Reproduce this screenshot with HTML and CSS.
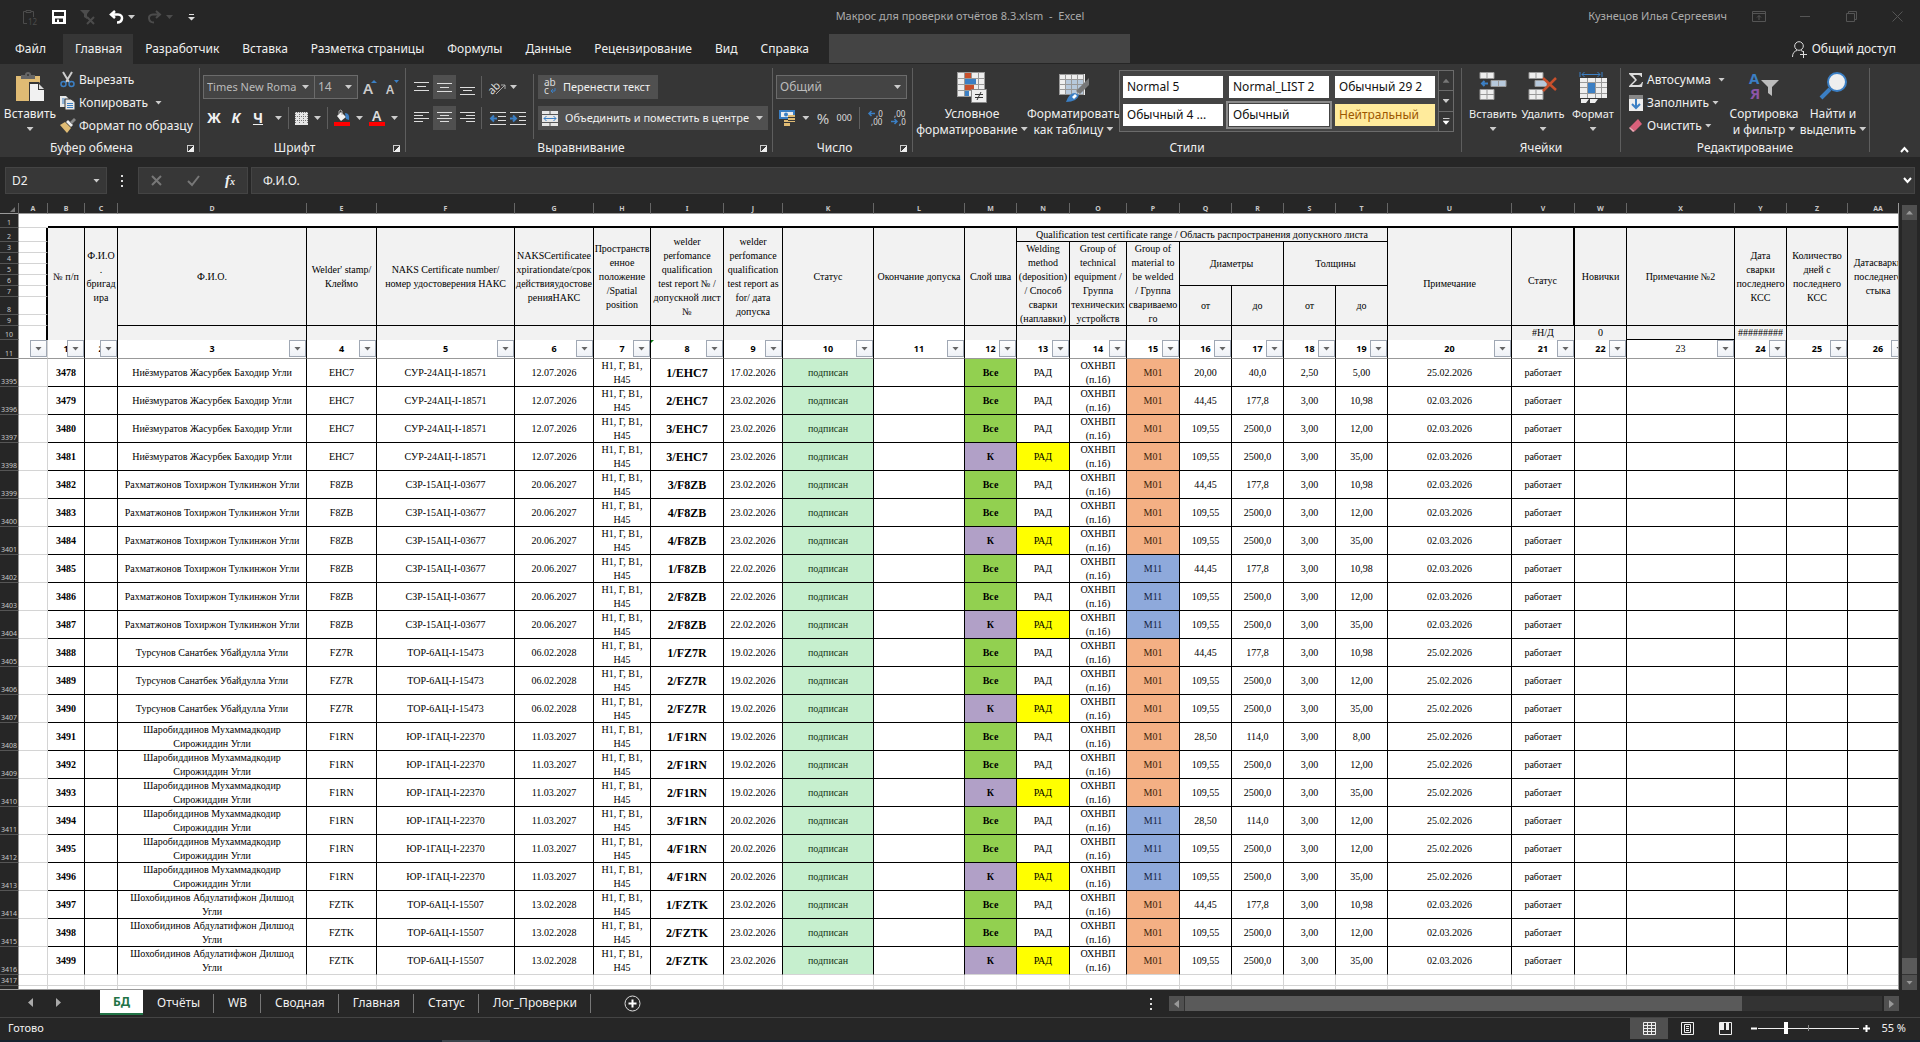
FILE: index.html
```html
<!DOCTYPE html>
<html lang="ru">
<head>
<meta charset="utf-8">
<title>Макрос для проверки отчётов 8.3.xlsm - Excel</title>
<link rel="stylesheet" href="styles.css">
</head>
<body>
<header class="titlebar">
  <div class="qat">
    <button class="ib dim" aria-label="Вставить значения"><svg width="16" height="16" viewBox="0 0 16 16"><path d="M4 2.500H1.500V14.500H5M9 2.500h2.500V8M4 1.500h5v2H4z" fill="none" stroke="#4c4c4c"/><text x="6" y="16" class="svg8" fill="#4c4c4c">12</text></svg></button>
    <button class="ib" aria-label="Сохранить"><svg width="14" height="14" viewBox="0 0 14 14"><path d="M0 0h14v14H0zM2 2v4h10V2zM3 8.500V12h2V9.500h2V12h4V8.500z" fill="#fff" fill-rule="evenodd"/></svg></button>
    <button class="ib dim" aria-label="Очистить фильтр"><svg width="15" height="15" viewBox="0 0 15 15"><path d="M0 0h10L7 4v5l-3-2V4z" fill="#4c4c4c"/><path d="M7 7l7 7M14 7l-7 7" stroke="#4c4c4c" stroke-width="2"/></svg></button>
    <button class="ib" aria-label="Отменить"><svg width="15" height="14" viewBox="0 0 15 14"><path d="M6 1L2 4.500 6 8M2 4.500h7c6 0 5 8-1 8" fill="none" stroke="#fff" stroke-width="2.500"/></svg></button><i class="tri"></i>
    <button class="ib dim" aria-label="Вернуть"><svg width="15" height="14" viewBox="0 0 15 14"><path d="M9 1l4 3.500L9 8M13 4.500H6c-6 0-5 8 1 8" fill="none" stroke="#4c4c4c" stroke-width="2"/></svg></button><i class="tri dimtri"></i>
    <button class="ib custom" aria-label="Настройка панели"><svg width="7" height="7" viewBox="0 0 7 7"><path d="M1 0h5v1H1zM0 3h7L3.500 6.500z" fill="#ddd"/></svg></button>
  </div>
  <h1 class="doc">Макрос для проверки отчётов 8.3.xlsm&nbsp; -&nbsp; Excel</h1>
  <div class="window">
    <span class="user">Кузнецов Илья Сергеевич</span>
    <button class="ib" aria-label="Параметры ленты"><svg width="14" height="11" viewBox="0 0 14 11"><path d="M.5.500h13v10H.5zM.5 2.500h13M7 9V4.500M5 6.500l2-2 2 2" fill="none" stroke="#555"/></svg></button>
    <button class="ib" aria-label="Свернуть"><svg width="10" height="11" viewBox="0 0 10 11"><path d="M0 5.500h10" stroke="#555"/></svg></button>
    <button class="ib" aria-label="Восстановить"><svg width="11" height="11" viewBox="0 0 11 11"><path d="M.5 2.500h8v8h-8zM2.500 2V.5h8v8H9" fill="none" stroke="#555"/></svg></button>
    <button class="ib" aria-label="Закрыть"><svg width="11" height="11" viewBox="0 0 11 11"><path d="M.5.500l10 10M10.500.5l-10 10" stroke="#555"/></svg></button>
  </div>
</header>
<nav class="tabs">
  <button>Файл</button><button class="on">Главная</button><button>Разработчик</button><button>Вставка</button><button>Разметка страницы</button><button>Формулы</button><button>Данные</button><button>Рецензирование</button><button>Вид</button><button>Справка</button>
  <input class="search" type="text" aria-label="Поиск">
  <button class="share"><svg width="16" height="17" viewBox="0 0 16 17"><circle cx="7" cy="5" r="4.300" fill="none" stroke="#ddd"/><path d="M.5 16c0-4 2-6 4.500-6.500M9 9.500l2 1M8 13.500h7M11.500 10v7" fill="none" stroke="#ddd"/></svg>Общий доступ</button>
</nav>

<section class="ribbon">
  <div class="group g-clip">
    <div class="body">
      <button class="big paste"><svg width="30" height="31" viewBox="0 0 30 31"><path d="M1 4h24v25H1z" fill="#dfbb74"/><path d="M6 7V3h4q0-3 3-3t3 3h4v4z" fill="#666"/><circle cx="13" cy="3" r="1" fill="#363636"/><path d="M14 10h10l6 6v15H14z" fill="#363636"/><path d="M15 12h8v6h6v11H15z" fill="#f1f1f1"/><path d="M24 12l5 5h-5z" fill="#ddd"/></svg>Вставить<i class="tri"></i></button>
      <div class="stack">
        <button><svg width="16" height="16" viewBox="0 0 16 16"><path d="M3 0l6 10M12 0L6 10" stroke="#ccc" stroke-width="2"/><circle cx="3.500" cy="12" r="2.500" fill="none" stroke="#3b7fc4" stroke-width="1.500"/><circle cx="11.500" cy="12" r="2.500" fill="none" stroke="#3b7fc4" stroke-width="1.500"/></svg>Вырезать</button>
        <button><svg width="16" height="16" viewBox="0 0 16 16"><path d="M0 1h6l3 3v8H0z" fill="#e8e8e8"/><path d="M2 4h3M2 6h3M2 8h3" stroke="#3b7fc4"/><path d="M5 4h6l4 3v8H5z" fill="#e8e8e8" stroke="#363636"/><path d="M7 8.500h6M7 10.500h6M7 12.500h6" stroke="#3b7fc4"/></svg>Копировать<i class="tri far"></i></button>
        <button><svg width="16" height="16" viewBox="0 0 16 16"><path d="M0 7l5-3 6 6-4 5z" fill="#dfbb74"/><path d="M6 4l2-2 5 5-2 2z" fill="#eee"/><path d="M10 4l4-4 2 2-4 4z" fill="#888"/></svg>Формат по образцу</button>
      </div>
    </div>
    <div class="label">Буфер обмена<i class="launch"></i></div>
  </div>

  <div class="group g-font">
    <div class="body rows">
      <div class="row">
        <span class="combo c-font"><select aria-label="Шрифт"><option>Times New Roma</option></select></span><span class="combo c-size"><select aria-label="Размер"><option>14</option></select></span>
        <button class="ib grow" aria-label="Увеличить"><svg width="14" height="16" viewBox="0 0 14 16"><text x="0" y="15" class="svg15" fill="#ccc">A</text><path d="M8 4l3-3 3 3z" fill="#3b7fc4"/></svg></button>
        <button class="ib" aria-label="Уменьшить"><svg width="14" height="16" viewBox="0 0 14 16"><text x="0" y="15" class="svg12" fill="#ccc">A</text><path d="M8 1h5l-2.500 3z" fill="#3b7fc4"/></svg></button>
      </div>
      <div class="row fmt">
        <span class="biu"><button class="ib"><b>Ж</b></button><button class="ib"><b><em>К</em></b></button><button class="ib"><b><u>Ч</u></b></button></span><i class="tri"></i><i class="sep"></i>
        <button class="ib" aria-label="Границы"><svg width="13" height="13" viewBox="0 0 13 13"><path d="M0 0h13v13H0z" fill="#e6e6e6"/><path d="M0 .5h13M0 4.500h13M0 8.500h13M.5 0v12M4.500 0v12M8.500 0v12M12.500 0v12" stroke="#777" stroke-dasharray="1 1"/></svg></button><i class="tri"></i><i class="sep"></i>
        <button class="ib" aria-label="Заливка"><svg width="16" height="16" viewBox="0 0 16 16"><path d="M3 6l4-4 5 5-5 4z" fill="#f1f1f1"/><path d="M5 4V1q2-2 3 0v4" fill="none" stroke="#aaa"/><path d="M11 3q5 0 4 7l-3-1z" fill="#3b7fc4"/><path d="M0 12h16v4H0z" fill="#f00"/></svg></button><i class="tri"></i>
        <button class="ib" aria-label="Цвет шрифта"><svg width="16" height="16" viewBox="0 0 16 16"><text x="3" y="11" class="svg14" fill="#ddd">A</text><path d="M0 12h16v4H0z" fill="#f00"/></svg></button><i class="tri"></i>
      </div>
    </div>
    <div class="label">Шрифт<i class="launch"></i></div>
  </div>

  <div class="group g-align">
    <div class="body">
      <div class="rows alignbtns">
        <div class="row">
          <button class="tog" aria-label="По верхнему краю"><svg width="15" height="15"><path d="M0 2.500h15M3 6.500h9M0 10.500h15" stroke="#ddd"/></svg></button>
          <button class="tog sel" aria-label="По середине"><svg width="15" height="15"><path d="M0 3.500h15M3 7.500h9M0 11.500h15" stroke="#ddd"/></svg></button>
          <button class="tog" aria-label="По нижнему краю"><svg width="15" height="15"><path d="M0 7.500h15M3 10.500h9M0 14.500h15" stroke="#ddd"/></svg></button>
          <i class="sep"></i>
          <button class="ib orient" aria-label="Ориентация"><svg width="16" height="16" viewBox="0 0 16 16"><text x="-2" y="13" transform="rotate(-45 4 10)" class="svg11" fill="#ddd">ab</text><path d="M6 15l9-9M11 6h4v4" fill="none" stroke="#aaa"/></svg></button><i class="tri"></i>
        </div>
        <div class="row">
          <button class="tog" aria-label="По левому краю"><svg width="15" height="15"><path d="M0 1.500h15M0 4.500h9M0 7.500h15M0 10.500h9" stroke="#ddd"/></svg></button>
          <button class="tog sel" aria-label="По центру"><svg width="15" height="15"><path d="M0 1.500h15M3 4.500h9M0 7.500h15M3 10.500h9" stroke="#ddd"/></svg></button>
          <button class="tog" aria-label="По правому краю"><svg width="15" height="15"><path d="M0 1.500h15M6 4.500h9M0 7.500h15M6 10.500h9" stroke="#ddd"/></svg></button>
          <i class="sep"></i>
          <button class="ib orient" aria-label="Уменьшить отступ"><svg width="16" height="13"><path d="M0 .5h16M8 4.500h8M8 8.500h8M0 12.500h16" stroke="#ddd"/><path d="M7 6.500H1M4 3.500l-3 3 3 3" fill="none" stroke="#3b7fc4" stroke-width="2"/></svg></button>
          <button class="ib" aria-label="Увеличить отступ"><svg width="16" height="13"><path d="M0 .5h16M9 4.500h7M9 8.500h7M0 12.500h16" stroke="#ddd"/><path d="M0 6.500h6M3 3.500l3 3-3 3" fill="none" stroke="#3b7fc4" stroke-width="2"/></svg></button>
        </div>
      </div>
      <div class="rows wraps">
        <button class="wide"><svg width="14" height="16" viewBox="0 0 14 16"><text x="1" y="7" class="svg10" fill="#ddd">ab</text><text x="1" y="15" class="svg10" fill="#ddd">c</text><path d="M12 9v3H8M10 10l-2 2 2 2" fill="none" stroke="#3b7fc4"/></svg>Перенести текст</button>
        <button class="wide merge"><svg width="16" height="15" viewBox="0 0 16 15"><path d="M0 0h16v15H0z" fill="#e6e6e6"/><path d="M0 3.500h16M0 11.500h16M8 0v3M8 12v3" stroke="#555"/><path d="M2 7.500h12M4.500 5l-2.500 2.500L4.500 10M11.500 5L14 7.500 11.500 10" fill="none" stroke="#3b7fc4"/></svg>Объединить и поместить в центре<i class="tri"></i></button>
      </div>
    </div>
    <div class="label">Выравнивание<i class="launch"></i></div>
  </div>

  <div class="group g-num">
    <div class="body rows">
      <div class="row"><span class="combo c-num"><select aria-label="Числовой формат"><option>Общий</option></select></span></div>
      <div class="row nums">
        <button class="ib" aria-label="Денежный формат"><svg width="16" height="16" viewBox="0 0 16 16"><path d="M0 0h16v9H0z" fill="#3b7fc4"/><path d="M2 2h12v5H2z" fill="#eee"/><circle cx="7" cy="4.500" r="2" fill="#3b7fc4"/><path d="M9 5h7v7H9zM5 10h6v6H5z" fill="#dfbb74"/><path d="M9 7.500h7M9 10.500h7M5 12.500h6" stroke="#363636"/></svg></button><i class="tri"></i>
        <button class="ib pct">%</button><button class="ib ths">000</button><i class="sep"></i>
        <button class="ib" aria-label="Увеличить разрядность"><svg width="16" height="16" viewBox="0 0 16 16"><path d="M7 3.500H1M3.500 1L1 3.500 3.500 6" fill="none" stroke="#3b7fc4" stroke-width="1.500"/><text x="8" y="7" class="svg8" fill="#ddd">,0</text><text x="3" y="15" class="svg8" fill="#ddd">,00</text></svg></button>
        <button class="ib" aria-label="Уменьшить разрядность"><svg width="16" height="16" viewBox="0 0 16 16"><path d="M0 11.500h6M3.500 9L6 11.500 3.500 14" fill="none" stroke="#3b7fc4" stroke-width="1.500"/><text x="3" y="7" class="svg8" fill="#ddd">,00</text><text x="8" y="15" class="svg8" fill="#ddd">,0</text></svg></button>
      </div>
    </div>
    <div class="label">Число<i class="launch"></i></div>
  </div>

  <div class="group g-style">
    <div class="body">
      <button class="big cond"><svg width="30" height="31" viewBox="0 0 30 31"><path d="M0 0h28v25H0z" fill="#eee"/><path d="M8 1h6v5H8zM8 13h9v5H8z" fill="#c8502c"/><path d="M8 7h11v5H8zM8 19h4v5H8z" fill="#3b7fc4"/><path d="M.5 0v25M7.500 0v25M14.500 0v6M21.500 0v25M27.500 0v25M0 .5h28M0 6.500h28M0 12.500h28M0 18.500h28M0 24.500h28" stroke="#999"/><path d="M14.500 17.500h15v13h-15z" fill="#eee" stroke="#888"/><path d="M18 22.500h8M18 25.500h8M24 20l-4 8" stroke="#333"/></svg><span>Условное<br>форматирование <i class="tri"></i></span></button>
      <button class="big tbl"><svg width="30" height="31" viewBox="0 0 30 31"><path d="M0 2h26v21H0z" fill="#eee"/><path d="M6 8h19v15H6z" fill="#b7c9dc"/><path d="M.5 2v21M6.500 2v21M12.500 2v21M18.500 2v21M24.500 2v21M0 2.500h25M0 7.500h25M0 12.500h25M0 17.500h25M0 22.500h25" stroke="#999"/><path d="M30 6v7l-9 9-4-3z" fill="#777"/><path d="M7 30q3-9 9-9l4 2q-2 7-13 7z" fill="#3b7fc4"/><path d="M13 25l3-3 2 2-3 3z" fill="#fff"/></svg><span>Форматировать<br>как таблицу <i class="tri"></i></span></button>
      <div class="gallery">
        <div class="swatches">
          <button>Normal 5</button><button>Normal_LIST 2</button><button>Обычный 29 2</button>
          <button>Обычный 4 ...</button><button class="cur">Обычный</button><button class="neutral">Нейтральный</button>
        </div>
        <div class="scroller"><button aria-label="Вверх"><i class="tri up"></i></button><button aria-label="Вниз"><i class="tri"></i></button><button aria-label="Ещё"><i class="tri more"></i></button></div>
      </div>
    </div>
    <div class="label">Стили</div>
  </div>

  <div class="group g-cells">
    <div class="body">
      <button class="big"><svg width="28" height="31" viewBox="0 0 28 31"><path d="M1 1h14v6H1zM1 18h14v10H1z" fill="#eee"/><path d="M12 9h15v6H12z" fill="#b7c9dc"/><path d="M1 .5h14v6H1zM8 0v7M1 17.500h14v10H1zM8 17v11M1 22.500h14M12 8.500h15v6H12zM19.500 9v6" fill="none" stroke="#999"/><path d="M9 11.500H3M5.500 9L3 11.500 5.500 14" fill="none" stroke="#3b7fc4" stroke-width="2"/></svg>Вставить<i class="tri"></i></button>
      <button class="big"><svg width="30" height="31" viewBox="0 0 30 31"><path d="M1 1h14v6H1zM1 18h14v10H1z" fill="#eee"/><path d="M7 9h12v6H7z" fill="#b7c9dc"/><path d="M1 .5h14v6H1zM8 0v7M1 17.500h14v10H1zM8 17v11M1 22.500h14M7 8.500h12v6H7z" fill="none" stroke="#999"/><path d="M15 6l13 12M28 6L15 19" stroke="#c8502c" stroke-width="2.500"/></svg>Удалить<i class="tri"></i></button>
      <button class="big"><svg width="28" height="31" viewBox="0 0 28 31"><path d="M1 6h27v20H1zM2 27h8l-3 4H2zM11 27h8l-3 4h-5z" fill="#eee"/><path d="M9 11h7v10H9z" fill="#3b7fc4"/><path d="M1 10.500h27M1 15.500h8M16 15.500h12M1 21.500h27M8.500 6v20M16.500 6v20M22.500 6v20" stroke="#999"/><path d="M1 0v5M23 0v5M3 2.500h18M5.500 0L3 2.500 5.500 5M18.500 0L21 2.500 18.500 5" fill="none" stroke="#3b7fc4"/></svg>Формат<i class="tri"></i></button>
    </div>
    <div class="label">Ячейки</div>
  </div>

  <div class="group g-edit">
    <div class="body">
      <div class="stack">
        <button><svg width="16" height="16" viewBox="0 0 16 16"><path d="M1 1h13v4h-1q0-2-3-2H5l4 5-5 5h6q3 0 4-3h1l-1 5H1v-1l6-6-6-6z" fill="#ddd"/></svg>Автосумма<i class="tri far"></i></button>
        <button><svg width="16" height="16" viewBox="0 0 16 16"><path d="M1 0h14v16H1z" fill="#eee"/><path d="M1 0h14v4H1z" fill="#888"/><path d="M8 4v9M4 9l4 4 4-4" fill="none" stroke="#3b7fc4" stroke-width="2"/></svg>Заполнить<i class="tri"></i></button>
        <button><svg width="16" height="16" viewBox="0 0 16 16"><path d="M2 9l8-8 4 5-7 7z" fill="#d9617b"/><path d="M1 10l1-1 5 4-2 1z" fill="#f0a6b4"/></svg>Очистить<i class="tri"></i></button>
      </div>
      <button class="big sort"><svg width="30" height="31" viewBox="0 0 30 31"><text x="0" y="12" class="svg15b" fill="#3b7fc4">А</text><text x="1" y="27" class="svg15b" fill="#8d55a8">Я</text><path d="M12 8h18l-7 7v9l-4-3v-6z" fill="#bbb"/></svg><span>Сортировка<br>и фильтр <i class="tri"></i></span></button>
      <button class="big find"><svg width="28" height="31" viewBox="0 0 28 31"><path d="M11 17L2 26" stroke="#3b7fc4" stroke-width="4"/><circle cx="18" cy="10" r="9" fill="#eee" stroke="#3b7fc4" stroke-width="2"/></svg><span>Найти и<br>выделить <i class="tri"></i></span></button>
    </div>
    <div class="label">Редактирование</div>
  </div>
  <button class="ib collapse" aria-label="Свернуть ленту"><svg width="9" height="7"><path d="M1 6l3.500-4L8 6" fill="none" stroke="#fff" stroke-width="2"/></svg></button>
</section>

<section class="formula">
  <div class="namebox"><input type="text" value="D2" aria-label="Имя"><i class="tri"></i></div>
  <i class="dots"></i>
  <div class="fxbox">
    <button class="ib" aria-label="Отмена"><svg width="11" height="11"><path d="M1 1l9 9M10 1l-9 9" stroke="#777" stroke-width="2"/></svg></button>
    <button class="ib" aria-label="Ввод"><svg width="13" height="11"><path d="M1 6l4 4 7-9" fill="none" stroke="#777" stroke-width="2"/></svg></button>
    <button class="ib fx"><em>f<small>x</small></em></button>
  </div>
  <div class="fbar"><input type="text" value="Ф.И.О." aria-label="Строка формул"><svg width="9" height="7"><path d="M1 1l3.500 4L8 1" fill="none" stroke="#fff" stroke-width="2"/></svg></div>
</section>

<main class="sheet">
  <div class="grid">
    <table>
      <colgroup id="cols"></colgroup>
      <thead><tr class="letters" id="letters"></tr></thead>
      <tbody>
        <tr class="r14 first"><th>1</th><td class="a"></td><td colspan="26" class="thick"></td></tr>
        <tr class="r14 hd"><th>2</th><td class="a edge"></td>
          <td rowspan="8" class="nb">№ п/п</td><td rowspan="8" class="nb">Ф.И.О<br>.<br>бригад<br>ира</td><td rowspan="8">Ф.И.О.</td><td rowspan="8">Welder' stamp/<br>Клеймо</td><td rowspan="8">NAKS Certificate number/<br>номер удостоверения НАКС</td><td rowspan="8">NAKSCertificatee<br>xpirationdate/срок<br>действияудостове<br>ренияНАКС</td><td rowspan="8">Пространств<br>енное<br>положение<br>/Spatial<br>position</td><td rowspan="8">welder<br>perfomance<br>qualification<br>test report № /<br>допускной лист<br>№</td><td rowspan="8">welder<br>perfomance<br>qualification<br>test report as<br>for/ дата<br>допуска</td><td rowspan="8">Статус</td><td rowspan="8">Окончание допуска</td><td rowspan="8">Слой шва</td>
          <td colspan="7" class="range">Qualification test certificate range / Область распространения допускного листа</td>
          <td class="nb"></td><td rowspan="8" class="right2 low">Статус</td><td rowspan="8">Новички</td><td rowspan="8">Примечание №2</td><td rowspan="8">Дата<br>сварки<br>последнего<br>КСС</td><td rowspan="8">Количество<br>дней с<br>последнего<br>КСС</td><td rowspan="8">Датасварки<br>последнего<br>стыка</td></tr>
        <tr class="r11 hd"><th>3</th><td class="a edge"></td><td rowspan="7"><div class="clip">Welding<br>method<br>(deposition)<br>/ Способ<br>сварки<br>(наплавки)</div></td><td rowspan="7"><div class="clip">Group of<br>technical<br>equipment /<br>Группа<br>технических<br>устройств</div></td><td rowspan="7"><div class="clip">Group of<br>material to<br>be welded<br>/ Группа<br>свариваемо<br>го</div></td><td colspan="2" rowspan="4">Диаметры</td><td colspan="2" rowspan="4">Толщины</td><td rowspan="7">Примечание</td></tr>
        <tr class="r11 hd"><th>4</th><td class="a edge"></td></tr>
        <tr class="r11 hd"><th>5</th><td class="a edge"></td></tr>
        <tr class="r11 hd"><th>6</th><td class="a edge"></td></tr>
        <tr class="r11 hd"><th>7</th><td class="a edge"></td><td rowspan="3">от</td><td rowspan="3">до</td><td rowspan="3">от</td><td rowspan="3">до</td></tr>
        <tr class="r18 hd"><th>8</th><td class="a edge"></td></tr>
        <tr class="r11 hd"><th>9</th><td class="a edge"></td></tr>
        <tr class="r14 hd ten"><th>10</th><td class="a edge"></td><td></td><td></td><td></td><td></td><td></td><td></td><td></td><td></td><td></td><td></td><td class="white"></td><td></td><td></td><td></td><td></td><td></td><td></td><td></td><td></td><td></td><td>#Н/Д</td><td>0</td><td class="under"></td><td>#########</td><td></td><td></td></tr>
        <tr class="r19" id="filters"><th>11</th></tr>
      </tbody>
      <tbody id="data"></tbody>
      <tbody>
        <tr class="r11 blank" id="blank1"><th>3417</th></tr>
        <tr class="r11 blank" id="blank2"><th>3418</th></tr>
      </tbody>
    </table>
  </div>
  <div class="vscroll"><button aria-label="Вверх"><i class="tri up"></i></button><div class="vtrack"><div class="vthumb"></div></div><button aria-label="Вниз"><i class="tri"></i></button></div>
</main>

<footer>
  <div class="sheetbar">
    <div class="nav"><button class="ib" aria-label="Назад"><svg width="5" height="9"><path d="M5 0v9L0 4.500z" fill="#aaa"/></svg></button><button class="ib" aria-label="Вперёд"><svg width="5" height="9"><path d="M0 0v9l5-4.500z" fill="#aaa"/></svg></button></div>
    <button class="st on">БД</button><button class="st">Отчёты</button><button class="st">WB</button><button class="st">Сводная</button><button class="st">Главная</button><button class="st">Статус</button><button class="st">Лог_Проверки</button>
    <button class="ib add" aria-label="Новый лист"><svg width="17" height="17"><circle cx="8.500" cy="8.500" r="7.500" fill="none" stroke="#ddd"/><path d="M4.500 8.500h8M8.500 4.500v8" stroke="#fff" stroke-width="2"/></svg></button>
    <i class="dots"></i>
    <div class="hscroll"><button aria-label="Влево"><svg width="5" height="8"><path d="M5 0v8L0 4z" fill="#999"/></svg></button><div class="htrack"><div class="hthumb"></div></div><button aria-label="Вправо"><svg width="5" height="8"><path d="M0 0v8l5-4z" fill="#999"/></svg></button></div>
  </div>
  <div class="status">
    <span>Готово</span>
    <div class="views">
      <button class="on" aria-label="Обычный"><svg width="13" height="13"><path d="M.5.500h12v12H.5zM4.500 0v13M8.500 0v13M0 3.500h13M0 6.500h13M0 9.500h13" fill="none" stroke="#eee"/></svg></button>
      <button aria-label="Разметка страницы"><svg width="13" height="13"><path d="M.5.500h12v12H.5zM3.500 2.500h6v8h-6zM5 4.500h3M5 6.500h3M5 8.500h3" fill="none" stroke="#eee"/></svg></button>
      <button aria-label="Страничный"><svg width="13" height="13"><path d="M.5.500h12v12H.5z" fill="none" stroke="#eee"/><path d="M1 1h4v7H1zM7 1h3v7H7z" fill="#eee"/></svg></button>
    </div>
    <button class="ib" aria-label="Уменьшить масштаб"><svg width="7" height="9"><path d="M0 4.500h6" stroke="#fff" stroke-width="2"/></svg></button>
    <input class="zoom" type="range" min="0" max="100" value="26" aria-label="Масштаб">
    <button class="ib" aria-label="Увеличить масштаб"><svg width="9" height="9"><path d="M1 4.500h7M4.500 1v7" stroke="#fff" stroke-width="2"/></svg></button>
    <span class="pct55">55 %</span>
  </div>
  <div class="taskbar"></div>
</footer>
<script src="script.js"></script>
</body>
</html>
```
FILE: styles.css
```css
* { box-sizing: border-box; }
body {
  margin: 0; height: 100vh; display: flex; flex-direction: column; overflow: hidden;
  background: #262626; color: #f0f0f0;
  font: 12px/16px "Noto Sans", "Open Sans", sans-serif;
}
button, input, select { font: inherit; color: inherit; background: none; border: 0; padding: 0; margin: 0; border-radius: 0; }
button { white-space: nowrap; }
input { min-width: 0; }
svg { display: block; flex: none; overflow: visible; }
.svg8 { font-size: 8px; }
.svg10 { font-size: 10px; }
.svg11 { font-size: 11px; }
.svg12 { font-size: 12px; font-weight: 600; }
.svg14 { font-size: 14px; font-weight: 600; }
.svg15 { font-size: 15px; font-weight: 600; }
.svg15b { font-size: 15px; font-weight: 700; }
.ib { display: flex; align-items: center; justify-content: center; }
.tri { display: inline-block; flex: none; width: 7px; height: 4px; background: #ccc; clip-path: polygon(0 0, 100% 0, 50% 100%); }
.tri.up { clip-path: polygon(50% 0, 100% 100%, 0 100%); background: #777; }
.tri.more { height: 7px; background: #fff; clip-path: polygon(0 0, 100% 0, 100% 14%, 0 14%, 0 43%, 100% 43%, 50% 100%, 0 43%); }
.dimtri { background: #4c4c4c; }
.sep { width: 1px; height: 22px; background: #5e5e5e; flex: none; }
.dots { flex: none; width: 2px; height: 12px; background: repeating-linear-gradient(#ddd 0 2px, transparent 2px 5px); }

.titlebar { flex: none; height: 34px; display: grid; grid-template-columns: 1fr auto 1fr; align-items: center; color: #ababab; }
.qat { display: flex; align-items: center; padding-left: 22px; }
.qat .ib { margin-right: 14px; }
.qat .ib:nth-of-type(4), .qat .ib:nth-of-type(5) { margin-right: 4px; }
.qat .tri { margin-right: 12px; }
.qat .dimtri { margin-right: 15px; }
.doc { margin: 0; font-size: 11px; font-weight: 400; padding-bottom: 2px; }
.window { display: flex; align-items: center; justify-content: flex-end; gap: 32px; padding-right: 16px; padding-bottom: 2px; font-size: 11px; }
.window .ib { width: 14px; }
.user { margin-right: -7px; }

.tabs { flex: none; height: 30px; display: flex; }
.tabs button { padding: 0 11px 0 12px; }
.tabs button:first-child { padding: 0 17px 0 15px; }
.tabs .on { background: #363636; }
.search { width: 301px; height: 29px; margin-left: 9px; background: #444; }
.tabs .share { margin-left: auto; padding: 0 24px 0 0; display: flex; align-items: center; gap: 4px; }

.ribbon { flex: none; height: 93px; display: flex; background: #363636; padding-top: 4px; }
.group { flex: none; height: 84px; border-right: 1px solid #5e5e5e; display: flex; flex-direction: column; }
.g-clip { width: 200px; } .g-font { width: 206px; } .g-align { width: 367px; } .g-num { width: 140px; }
.g-style { width: 549px; } .g-cells { width: 159px; } .g-edit { width: 249px; }
.body { flex: 1; display: flex; min-height: 0; }
.label { position: relative; flex: none; line-height: 8px; text-align: center; padding-right: 16px; }
.g-style .label, .g-cells .label, .g-edit .label { padding-right: 0; }
.launch { position: absolute; right: 5px; top: 1px; width: 7px; height: 7px; border: solid #ccc; border-width: 1px 0 0 1px; background: linear-gradient(135deg, transparent 45%, #eee 45%); }
.big { display: flex; flex-direction: column; align-items: center; padding-top: 4px; text-align: center; line-height: 16px; }
.big svg { margin-bottom: 3px; }
.big > .tri { margin-top: 5px; }
.big .tri { vertical-align: 3px; }
.paste { width: 60px; }
.stack { display: flex; flex-direction: column; }
.stack button { height: 23px; display: flex; align-items: center; gap: 3px; }
.tri.far { margin-left: 4px; }
.rows { display: flex; flex-direction: column; gap: 7px; padding-top: 7px; }
.row { display: flex; align-items: center; height: 24px; }
.g-font .body, .g-num .body { padding-left: 3px; }
.combo { position: relative; height: 24px; border: 1px solid #6b6b6b; background: #444; color: #bbb; }
.combo select { appearance: none; width: 100%; height: 22px; padding-left: 3px; }
.combo::after { content: ""; position: absolute; right: 5px; top: 9px; width: 7px; height: 4px; background: #ccc; clip-path: polygon(0 0, 100% 0, 50% 100%); pointer-events: none; }
.c-font { width: 112px; font-size: 11px; } .c-size { width: 43px; border-left: 0; } .c-num { width: 131px; }
.grow { margin: 0 9px 0 5px; }
.fmt { font-size: 14px; justify-content: space-between; padding-right: 7px; }
.fmt b { font-weight: 700; }
.biu { display: flex; }
.biu .ib { width: 22px; }
.alignbtns { width: 128px; padding-left: 4px; border-right: 1px solid #5e5e5e; margin: 6px 0 5px; padding-top: 1px; }
.tog { width: 23px; height: 24px; display: flex; align-items: center; justify-content: center; }
.sel { background: #505050; }
.row .orient { margin: 0 4px 0 8px; }
.alignbtns .sep { margin-left: 2px; }
.wraps { padding-left: 4px; align-items: flex-start; }
.wide { height: 24px; background: #505050; display: flex; align-items: center; gap: 6px; padding: 0 8px 0 5px; font-size: 11px; }
.merge { width: 230px; justify-content: space-between; padding: 0 5px 0 4px; }
.nums { padding: 0 5px 0 3px; justify-content: space-between; }
.pct { font-size: 15px; color: #ccc; } .ths { font-size: 9px; color: #ddd; }
.cond { width: 118px; } .tbl { width: 85px; }
.gallery { display: flex; height: 62px; width: 335px; margin: 2px 0 0 3px; border: 1px solid #6b6b6b; background: #444; }
.swatches { flex: 1; display: grid; grid-template-columns: repeat(3, 100px); gap: 6px; align-content: center; padding-left: 3px; }
.swatches button { height: 22px; background: #fff; color: #111; text-align: left; padding-left: 4px; }
.swatches .cur { outline: 2px solid #8a8a8a; outline-offset: 1px; }
.swatches .neutral { background: #ffeb9c; color: #9c5700; }
.scroller { width: 15px; display: flex; flex-direction: column; border-left: 1px solid #6b6b6b; background: #363636; }
.scroller button { flex: 1; display: flex; align-items: center; justify-content: center; border-bottom: 1px solid #6b6b6b; }
.scroller button:last-child { border: 0; }
.g-style .body { padding-left: 0; }
.g-cells .body { padding-left: 6px; font-size: 11px; }
.g-cells .big { width: 50px; }
.g-edit .stack { width: 100px; padding-left: 7px; }
.sort { width: 86px; } .find { width: 52px; }
.collapse { margin: auto 11px 4px auto; }

.formula { flex: none; display: flex; align-items: center; padding: 10px 5px 9px; height: 46px; }
.namebox, .fxbox, .fbar { height: 27px; border: 1px solid #444; background: #373737; display: flex; align-items: center; }
.namebox { width: 102px; padding: 0 6px; }
.namebox input { flex: 1; }
.formula .dots { margin: 0 15px 0 14px; }
.fxbox { width: 110px; justify-content: space-between; padding: 0 12px; margin-right: 3px; }
.fx { font: 700 15px "Liberation Serif", serif; } .fx small { font-size: 10px; }
.fbar { flex: 1; padding: 0 2px 0 11px; }
.fbar input { flex: 1; }

.sheet { flex: 1; min-height: 0; display: flex; }
.grid { flex: 1; min-width: 0; overflow: hidden; border: solid #999; border-width: 0 1px 1px 0; background: #fff; }
table { table-layout: fixed; width: 100%; border-collapse: separate; border-spacing: 0; font: 10px/14px "Liberation Serif", serif; color: #000; }
td, th { padding: 0; text-align: center; vertical-align: middle; white-space: nowrap; overflow: hidden; }
td { border-right: 1px solid #000; border-bottom: 1px solid #000; }
th { background: #262626; color: #c8c8c8; font: 7px/9px "Noto Sans", sans-serif; vertical-align: bottom; border-right: 1px solid #999; border-bottom: 1px solid #555; }
.letters { height: 11px; }
.letters th { border-right-color: #666; border-bottom-color: #999; font-weight: 700; font-size: 7px; }
.letters th:first-child svg { margin: 0 3px 1px auto; }
.r11 { height: 11px; } .r14 { height: 14px; } .r18 { height: 18px; } .r19 { height: 19px; } .r28 { height: 28px; }
.hd td { background: #f2f2f2; }
.first td { border-right: 0; }
td.a, .hd td.a { background: #fff; border-color: #d4d4d4; }
.first td.thick { border-bottom: 2px solid #000; }
.hd td.edge { border-right: 2px solid #000; }
.hd td.nb, .ten td { border-bottom: 0; }
.hd td.white { background: #fff; }
.hd td.under { border-bottom: 1px solid #000; }
.range { line-height: 13px; }
.right2 { border-right-width: 2px; }
.low { padding-top: 8px; }
.clip { height: 83px; overflow: hidden; }
#filters td { position: relative; border-bottom-color: #999; font: 700 9px/18px "Noto Sans", sans-serif; }
#filters td.serif { font: 10px/18px "Liberation Serif", serif; }
#filters th { border-bottom-color: #999; }
.filter { position: absolute; right: 0; top: 0; width: 17px; height: 17px; border: 1px solid #a0a8b4; background: linear-gradient(#fff, #eef1f6); display: flex; align-items: center; justify-content: center; }
.filter .tri { background: #666; height: 4px; }
.note::before { content: ""; position: absolute; left: 0; top: 0; width: 3px; height: 3px; background: #0a7d12; clip-path: polygon(0 0, 100% 0, 0 100%); }
.two { height: 27px; overflow: hidden; }
.bold { font-weight: 700; }
.report { font-weight: 700; font-size: 12px; }
.signed { background: #c6efce; color: #123312; }
.all { background: #92d050; font-weight: 700; }
.root { background: #b1a0c7; font-weight: 700; }
.hot { background: #ff0; }
.m01 { background: #f4b084; color: #3a1c08; } .m11 { background: #8ea9db; color: #14213d; }
.last td, .blank td { border-bottom-color: #d4d4d4; }
.blank td { border-right-color: #d4d4d4; }

.vscroll { flex: none; width: 21px; padding: 2px 3px 0; display: flex; flex-direction: column; }
.vscroll button, .hscroll button { flex: none; width: 15px; height: 15px; background: #505050; display: flex; align-items: center; justify-content: center; }
.vtrack { flex: 1; background: #333; display: flex; align-items: flex-end; padding-bottom: 1px; }
.vthumb { width: 15px; height: 16px; background: #5a5a5a; }
.vscroll .tri { background: #999; }

.sheetbar { height: 28px; display: flex; align-items: flex-start; border-bottom: 1px solid #444; font-size: 12px; }
.nav { width: 100px; height: 25px; display: flex; align-items: center; gap: 23px; padding-left: 28px; }
.st { height: 25px; padding: 0 14px; position: relative; }
.st::after { content: ""; position: absolute; right: 0; top: 4px; width: 1px; height: 19px; background: #777; }
.st.on { background: #fff; color: #217346; font-weight: 700; border-bottom: 2px solid #217346; padding: 0 13px; }
.st.on::after { display: none; }
.add { height: 27px; margin-left: 33px; }
.sheetbar .dots { margin: 8px 17px 0 auto; }
.hscroll { width: 38%; margin: 6px 21px 0 0; display: flex; }
.htrack { flex: 1; background: #333; display: flex; margin-right: 2px; }
.hthumb { width: 80%; height: 15px; background: #5a5a5a; border-left: 1px solid #333; }
.status { height: 22px; display: flex; align-items: center; padding: 0 14px 2px 8px; font-size: 11px; }
.views { margin-left: auto; margin-right: 7px; display: flex; }
.views button { width: 38px; height: 21px; display: flex; align-items: center; justify-content: center; }
.views .on { background: #505050; }
.zoom { appearance: none; width: 101px; height: 12px; margin: 0 3px 0 0; background: linear-gradient(#888, #888) 50% 50% / 1px 6px no-repeat, linear-gradient(#eee, #eee) 50% 50% / 100% 1px no-repeat; }
.zoom::-webkit-slider-thumb { appearance: none; width: 4px; height: 12px; background: #fff; }
.pct55 { margin-left: 10px; }
.taskbar { height: 2px; background: linear-gradient(90deg, transparent 23%, #3c444c 23% 25.500%, transparent 25.500%) #16222e; }
```
FILE: script.js
```js
const widths = [19, 29, 37, 33, 189, 70, 138, 79, 57, 73, 59, 91, 91, 52, 53, 57, 53, 52, 52, 52, 52, 124, 63, 52, 108, 52, 61, 61];
const names = 'A B C D E F G H I J K L M N O P Q R S T U V W X Y Z AA'.split(' ');

document.getElementById('cols').innerHTML = widths.map(w => `<col style="width:${w}px">`).join('');
document.getElementById('letters').innerHTML =
  '<th><svg width="5" height="5"><path d="M5 0v5H0z" fill="#777"/></svg></th>' + names.map(n => `<th>${n}</th>`).join('');

document.getElementById('filters').innerHTML += names.map((n, i) => {
  const cls = i === 0 ? 'a' : n === 'X' ? 'serif' : n === 'I' ? 'note' : '';
  return `<td class="${cls}">${i || ''}<button class="filter" aria-label="Фильтр ${n}"><i class="tri"></i></button></td>`;
}).join('');

const people = {
  n: ['Ниёзмуратов Жасурбек Баходир Угли', 'EHC7', 'СУР-24АЦ-I-18571', '12.07.2026'],
  r: ['Рахматжонов Тохиржон Тулкинжон Угли', 'F8ZB', 'СЗР-15АЦ-I-03677', '20.06.2027'],
  t: ['Турсунов Санатбек Убайдулла Угли', 'FZ7R', 'ТОР-6АЦ-I-15473', '06.02.2028'],
  s: ['Шаробиддинов Мухаммадкодир<br>Сирожиддин Угли', 'F1RN', 'ЮР-1ГАЦ-I-22370', '11.03.2027'],
  h: ['Шохобидинов Абдулатифжон Дилшод<br>Угли', 'FZTK', 'ТОР-6АЦ-I-15507', '13.02.2028']
};

// size: [diameter from, diameter to, thickness from, thickness to]
const sizes = {
  a: ['20,00', '40,0', '2,50', '5,00'],
  b: ['44,45', '177,8', '3,00', '10,98'],
  c: ['109,55', '2500,0', '3,00', '12,00'],
  d: ['109,55', '2500,0', '3,00', '35,00'],
  e: ['28,50', '114,0', '3,00', '8,00'],
  f: ['28,50', '114,0', '3,00', '12,00']
};

// person, report number, report date, layer, material, size, note date
const rows = `n 1 17.02 В М01 a 25.02
n 2 23.02 В М01 b 02.03
n 3 23.02 В М01 c 02.03
n 3 23.02 К М01 d 02.03
r 3 23.02 В М01 b 02.03
r 4 23.02 В М01 c 02.03
r 4 23.02 К М01 d 02.03
r 1 22.02 В М11 b 02.03
r 2 22.02 В М11 c 02.03
r 2 22.02 К М11 d 02.03
t 1 19.02 В М01 b 25.02
t 2 19.02 В М01 c 25.02
t 2 19.02 К М01 d 25.02
s 1 19.02 В М01 e 25.02
s 2 19.02 В М01 c 25.02
s 2 19.02 К М01 d 25.02
s 3 20.02 В М11 f 25.02
s 4 20.02 В М11 c 25.02
s 4 20.02 К М11 d 25.02
h 1 23.02 В М01 b 02.03
h 2 23.02 В М01 c 02.03
h 2 23.02 К М01 d 02.03`.split('\n').map(r => r.split(' '));

const cell = (text = '', cls = '') => `<td class="${cls}">${text}</td>`;

document.getElementById('data').innerHTML = rows.map(([p, num, date, layer, mat, size, note], i) => {
  const [name, stamp, cert, until] = people[p];
  const root = layer === 'К';
  return `<tr class="r28${i === rows.length - 1 ? ' last' : ''}"><th>${3395 + i}</th>` +
    cell('', 'a') + cell(3478 + i, 'bold') + cell() +
    cell(name.includes('<br>') ? `<div class="two">${name}</div>` : name) +
    cell(stamp) + cell(cert) + cell(until) +
    cell('<div class="two">Н1, Г, В1,<br>Н45</div>') +
    cell(`${num}/${stamp}`, 'report') + cell(`${date}.2026`) +
    cell('подписан', 'signed') + cell() +
    cell(root ? 'К' : 'Все', root ? 'root' : 'all') + cell('РАД', root ? 'hot' : '') +
    cell('<div class="two">ОХНВП<br>(п.1б)</div>') +
    cell(mat, mat === 'М01' ? 'm01' : 'm11') +
    sizes[size].map(v => cell(v)).join('') +
    cell(`${note}.2026`) + cell('работает') + cell().repeat(5) + '</tr>';
}).join('');

for (const id of ['blank1', 'blank2']) {
  document.getElementById(id).innerHTML += cell().repeat(names.length);
}
```
